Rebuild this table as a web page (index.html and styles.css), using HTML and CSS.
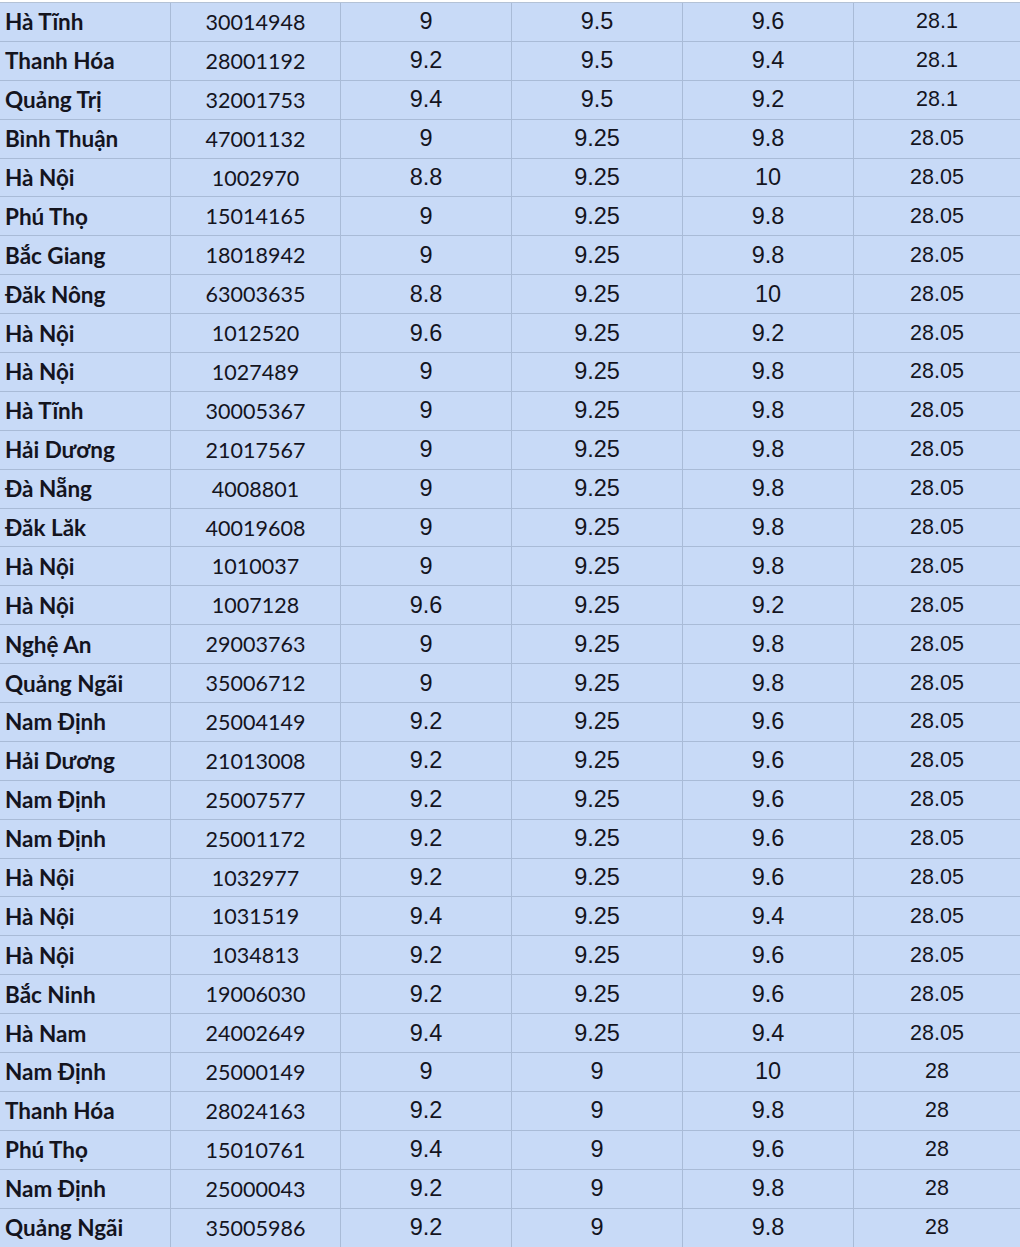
FILE: index.html
```html
<!DOCTYPE html>
<html lang="vi">
<head>
<meta charset="utf-8">
<title>Bảng điểm</title>
<link rel="stylesheet" href="styles.css">
</head>
<body>
<div class="sheet">
<div class="row"><div class="c name">Hà Tĩnh</div><div class="c sbd">30014948</div><div class="c num">9</div><div class="c num">9.5</div><div class="c num">9.6</div><div class="c tot">28.1</div></div>
<div class="row"><div class="c name">Thanh Hóa</div><div class="c sbd">28001192</div><div class="c num">9.2</div><div class="c num">9.5</div><div class="c num">9.4</div><div class="c tot">28.1</div></div>
<div class="row"><div class="c name">Quảng Trị</div><div class="c sbd">32001753</div><div class="c num">9.4</div><div class="c num">9.5</div><div class="c num">9.2</div><div class="c tot">28.1</div></div>
<div class="row"><div class="c name">Bình Thuận</div><div class="c sbd">47001132</div><div class="c num">9</div><div class="c num">9.25</div><div class="c num">9.8</div><div class="c tot">28.05</div></div>
<div class="row"><div class="c name">Hà Nội</div><div class="c sbd">1002970</div><div class="c num">8.8</div><div class="c num">9.25</div><div class="c num">10</div><div class="c tot">28.05</div></div>
<div class="row"><div class="c name">Phú Thọ</div><div class="c sbd">15014165</div><div class="c num">9</div><div class="c num">9.25</div><div class="c num">9.8</div><div class="c tot">28.05</div></div>
<div class="row"><div class="c name">Bắc Giang</div><div class="c sbd">18018942</div><div class="c num">9</div><div class="c num">9.25</div><div class="c num">9.8</div><div class="c tot">28.05</div></div>
<div class="row"><div class="c name">Đăk Nông</div><div class="c sbd">63003635</div><div class="c num">8.8</div><div class="c num">9.25</div><div class="c num">10</div><div class="c tot">28.05</div></div>
<div class="row"><div class="c name">Hà Nội</div><div class="c sbd">1012520</div><div class="c num">9.6</div><div class="c num">9.25</div><div class="c num">9.2</div><div class="c tot">28.05</div></div>
<div class="row"><div class="c name">Hà Nội</div><div class="c sbd">1027489</div><div class="c num">9</div><div class="c num">9.25</div><div class="c num">9.8</div><div class="c tot">28.05</div></div>
<div class="row"><div class="c name">Hà Tĩnh</div><div class="c sbd">30005367</div><div class="c num">9</div><div class="c num">9.25</div><div class="c num">9.8</div><div class="c tot">28.05</div></div>
<div class="row"><div class="c name">Hải Dương</div><div class="c sbd">21017567</div><div class="c num">9</div><div class="c num">9.25</div><div class="c num">9.8</div><div class="c tot">28.05</div></div>
<div class="row"><div class="c name">Đà Nẵng</div><div class="c sbd">4008801</div><div class="c num">9</div><div class="c num">9.25</div><div class="c num">9.8</div><div class="c tot">28.05</div></div>
<div class="row"><div class="c name">Đăk Lăk</div><div class="c sbd">40019608</div><div class="c num">9</div><div class="c num">9.25</div><div class="c num">9.8</div><div class="c tot">28.05</div></div>
<div class="row"><div class="c name">Hà Nội</div><div class="c sbd">1010037</div><div class="c num">9</div><div class="c num">9.25</div><div class="c num">9.8</div><div class="c tot">28.05</div></div>
<div class="row"><div class="c name">Hà Nội</div><div class="c sbd">1007128</div><div class="c num">9.6</div><div class="c num">9.25</div><div class="c num">9.2</div><div class="c tot">28.05</div></div>
<div class="row"><div class="c name">Nghệ An</div><div class="c sbd">29003763</div><div class="c num">9</div><div class="c num">9.25</div><div class="c num">9.8</div><div class="c tot">28.05</div></div>
<div class="row"><div class="c name">Quảng Ngãi</div><div class="c sbd">35006712</div><div class="c num">9</div><div class="c num">9.25</div><div class="c num">9.8</div><div class="c tot">28.05</div></div>
<div class="row"><div class="c name">Nam Định</div><div class="c sbd">25004149</div><div class="c num">9.2</div><div class="c num">9.25</div><div class="c num">9.6</div><div class="c tot">28.05</div></div>
<div class="row"><div class="c name">Hải Dương</div><div class="c sbd">21013008</div><div class="c num">9.2</div><div class="c num">9.25</div><div class="c num">9.6</div><div class="c tot">28.05</div></div>
<div class="row"><div class="c name">Nam Định</div><div class="c sbd">25007577</div><div class="c num">9.2</div><div class="c num">9.25</div><div class="c num">9.6</div><div class="c tot">28.05</div></div>
<div class="row"><div class="c name">Nam Định</div><div class="c sbd">25001172</div><div class="c num">9.2</div><div class="c num">9.25</div><div class="c num">9.6</div><div class="c tot">28.05</div></div>
<div class="row"><div class="c name">Hà Nội</div><div class="c sbd">1032977</div><div class="c num">9.2</div><div class="c num">9.25</div><div class="c num">9.6</div><div class="c tot">28.05</div></div>
<div class="row"><div class="c name">Hà Nội</div><div class="c sbd">1031519</div><div class="c num">9.4</div><div class="c num">9.25</div><div class="c num">9.4</div><div class="c tot">28.05</div></div>
<div class="row"><div class="c name">Hà Nội</div><div class="c sbd">1034813</div><div class="c num">9.2</div><div class="c num">9.25</div><div class="c num">9.6</div><div class="c tot">28.05</div></div>
<div class="row"><div class="c name">Bắc Ninh</div><div class="c sbd">19006030</div><div class="c num">9.2</div><div class="c num">9.25</div><div class="c num">9.6</div><div class="c tot">28.05</div></div>
<div class="row"><div class="c name">Hà Nam</div><div class="c sbd">24002649</div><div class="c num">9.4</div><div class="c num">9.25</div><div class="c num">9.4</div><div class="c tot">28.05</div></div>
<div class="row"><div class="c name">Nam Định</div><div class="c sbd">25000149</div><div class="c num">9</div><div class="c num">9</div><div class="c num">10</div><div class="c tot">28</div></div>
<div class="row"><div class="c name">Thanh Hóa</div><div class="c sbd">28024163</div><div class="c num">9.2</div><div class="c num">9</div><div class="c num">9.8</div><div class="c tot">28</div></div>
<div class="row"><div class="c name">Phú Thọ</div><div class="c sbd">15010761</div><div class="c num">9.4</div><div class="c num">9</div><div class="c num">9.6</div><div class="c tot">28</div></div>
<div class="row"><div class="c name">Nam Định</div><div class="c sbd">25000043</div><div class="c num">9.2</div><div class="c num">9</div><div class="c num">9.8</div><div class="c tot">28</div></div>
<div class="row"><div class="c name">Quảng Ngãi</div><div class="c sbd">35005986</div><div class="c num">9.2</div><div class="c num">9</div><div class="c num">9.8</div><div class="c tot">28</div></div>
</div>
</body>
</html>
```
FILE: styles.css
```css
html, body {
  margin: 0;
  padding: 0;
  background: #ffffff;
  overflow: hidden;
}
body {
  padding-top: 2px;
}
.sheet {
  width: 1020px;
  background: #c8daf7;
  border-top: 1px solid #b4c2d6;
  color: #14141e;
}
.row {
  display: grid;
  grid-template-columns: 171px 170px 171px 171px 171px 166px;
  height: 38.9px;
  box-sizing: border-box;
  border-bottom: 1px solid #a9bbd7;
}
.c {
  display: flex;
  align-items: center;
  justify-content: center;
  border-right: 1px solid #a9bbd7;
  white-space: nowrap;
  overflow: hidden;
}
.c:last-child {
  border-right: none;
}
.name {
  justify-content: flex-start;
  padding-left: 5px;
  font-family: Lato, "Open Sans", sans-serif;
  font-weight: 700;
  font-size: 22.5px;
}
.sbd {
  font-family: Lato, "Open Sans", sans-serif;
  font-size: 21.5px;
}
.num {
  font-family: "Liberation Sans", Arial, sans-serif;
  font-size: 23.5px;
}
.tot {
  font-family: "Liberation Sans", Arial, sans-serif;
  font-size: 21.5px;
}
```
